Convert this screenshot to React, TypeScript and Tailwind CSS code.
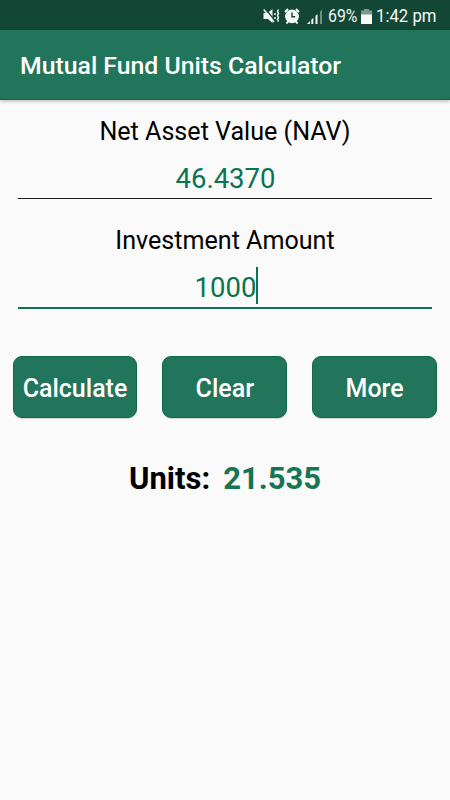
import React from "react";
import clsx from "clsx";

const MuteIcon = () => (
  <svg width="17" height="16" viewBox="0 0 17 16" fill="none">
    <path d="M0.5 5h4L9.5 1v14L5 11H0.5z" fill="#f4f8f6" />
    <path d="M2 0.5l9 11" stroke="#124735" strokeWidth="1.2" />
    <path d="M0.7 1.5l10.3 12.5" stroke="#f4f8f6" strokeWidth="1.4" />
    <path
      d="M12 5v2M12 9v2M15.5 1.5l-1 2 1 2-1 2 1 2-1 2 1 2"
      stroke="#f4f8f6"
      strokeWidth="1.5"
    />
  </svg>
);

const AlarmIcon = () => (
  <svg width="16" height="16" viewBox="0 0 16 16" fill="none">
    <circle cx="8" cy="8.3" r="6.9" fill="#f4f8f6" />
    <path
      d="M1 4l3-3M15 4l-3-3M2.5 15.5l2-2.5M13.5 15.5l-2-2.5"
      stroke="#f4f8f6"
      strokeWidth="2"
    />
    <path d="M8 4.5v4.3h3.2" stroke="#124735" strokeWidth="1.4" />
  </svg>
);

const SignalIcon = () => (
  <svg width="16" height="15" viewBox="0 0 16 15">
    <path d="M0 15l3-3v3z" fill="#f4f8f6" />
    <path d="M4.3 10.8l2-2V15h-2z" fill="#f4f8f6" />
    <path d="M8.5 7l2-2v10h-2z" fill="#f4f8f6" />
    <path d="M13 2.5L15 0.5V15h-2z" fill="#6d9082" />
  </svg>
);

const BatteryIcon = () => (
  <svg width="11" height="15" viewBox="0 0 11 15">
    <path d="M3 0h5v1.5h3V6H0V1.5h3z" fill="#7b9a8d" />
    <path d="M0 5.5h11V15H0z" fill="#f4f8f6" />
  </svg>
);

const StatusBar = () => (
  <div className="flex h-[30px] items-center bg-[#124735] pl-[263px] pt-[2px] text-[18px] leading-[28px] text-[#f4f8f6]">
    <MuteIcon />
    <div className="ml-1">
      <AlarmIcon />
    </div>
    <div className="ml-[7px]">
      <SignalIcon />
    </div>
    <span className="ml-[5px] w-[30px] origin-left scale-x-[0.88] whitespace-nowrap">
      69%
    </span>
    <div className="ml-[3px]">
      <BatteryIcon />
    </div>
    <span className="ml-[4px] origin-left scale-x-[0.93] whitespace-nowrap">
      1:42 pm
    </span>
  </div>
);

type FieldProps = {
  label: string;
  value: string;
  focused?: boolean;
};

const Field = ({ label, value, focused }: FieldProps) => (
  <div className="mx-[18px] h-[109px] text-center">
    <p className="pt-[17px] text-[25.1px] leading-[30px] text-black">{label}</p>
    <div
      className={clsx(
        "box-content flex h-[40px] justify-center text-[27.5px] leading-[41px] text-[#0b7350]",
        focused
          ? "mt-[11px] border-b-2 border-[#0b7350] pl-[3px]"
          : "mt-[11px] border-b border-[#1c1c1c] pl-px",
      )}
    >
      <span>{value}</span>
      {focused && <span className="h-[37px] w-[2px] bg-[#0b7350]" />}
    </div>
  </div>
);

const buttons = ["Calculate", "Clear", "More"];

const App = () => {
  return (
    <div className="h-[800px] w-[450px] overflow-hidden bg-[#fafafa] font-['Roboto',sans-serif]">
      <StatusBar />
      <header className="flex h-[70px] items-center border-b border-[#0b6844] bg-[#21755a] px-5 pt-[3px] shadow-[0_1px_4px_rgba(0,0,0,0.3)]">
        <h1 className="whitespace-nowrap text-[24.8px] font-medium text-white">
          Mutual Fund Units Calculator
        </h1>
      </header>
      <main>
        <Field label="Net Asset Value (NAV)" value="46.4370" />
        <Field label="Investment Amount" value="1000" focused />
        <div className="mt-[38px] flex gap-[25px] pl-[12.6px]">
          {buttons.map((name) => (
            <button
              key={name}
              className="h-[62px] w-[124.8px] rounded-[9px] border border-[#0f6947] bg-[#21755a] pt-[3px] text-[25px] font-medium text-white shadow-[0_1px_1px_rgba(0,0,0,0.15)]"
            >
              {name}
            </button>
          ))}
        </div>
        <div className="mt-[42px] flex justify-center gap-[13px] text-[31px] font-bold leading-[38px]">
          <span className="text-black">Units:</span>
          <span className="text-[#167552]">21.535</span>
        </div>
      </main>
    </div>
  );
};

export default App;
